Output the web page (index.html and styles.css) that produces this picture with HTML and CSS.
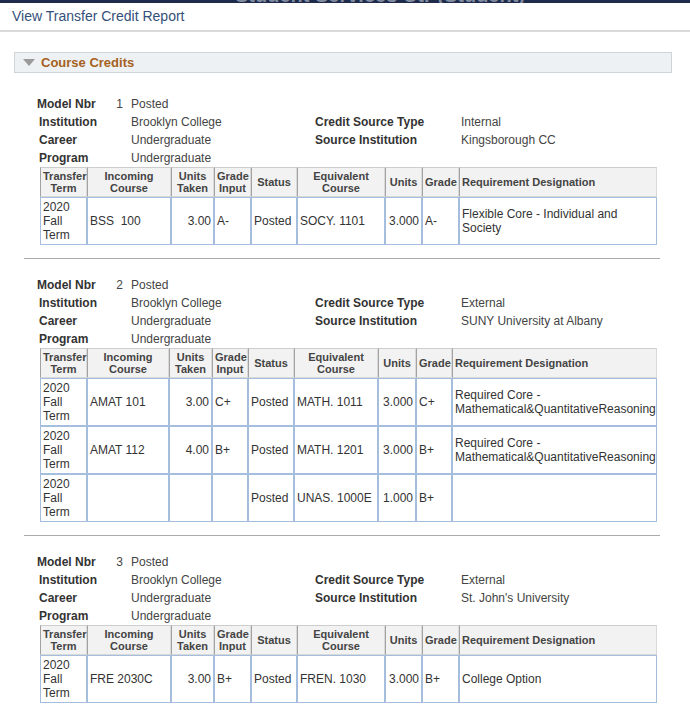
FILE: index.html
```html
<!DOCTYPE html>
<html>
<head>
<meta charset="utf-8">
<title>View Transfer Credit Report</title>
<link rel="stylesheet" href="styles.css">
</head>
<body>
<div class="topbar"><div class="topbar-text">Student Services Ctr (Student)</div></div>
<div class="page-title">View Transfer Credit Report</div>

<div class="group-box">
  <span class="caret"></span>
  <span class="group-title">Course Credits</span>
</div>

<div class="record">
  <div class="info">
    <div class="model"><span class="lbl">Model Nbr</span><span class="num">1</span></div>
    <div class="val">Posted</div><div></div><div></div>
    <div class="lbl">Institution</div><div class="val">Brooklyn College</div>
    <div class="lbl">Credit Source Type</div><div class="val">Internal</div>
    <div class="lbl">Career</div><div class="val">Undergraduate</div>
    <div class="lbl">Source Institution</div><div class="val">Kingsborough CC</div>
    <div class="lbl">Program</div><div class="val">Undergraduate</div><div></div><div></div>
  </div>
  <table class="grid">
    <colgroup><col style="width:47px"><col style="width:84px"><col style="width:43px"><col style="width:37px"><col style="width:46px"><col style="width:88px"><col style="width:37px"><col style="width:37px"><col style="width:198px"></colgroup>
    <thead><tr><th>Transfer Term</th><th>Incoming Course</th><th>Units Taken</th><th>Grade Input</th><th>Status</th><th>Equivalent Course</th><th>Units</th><th>Grade</th><th class="left">Requirement Designation</th></tr></thead>
    <tbody>
      <tr><td>2020 Fall Term</td><td>BSS&nbsp; 100</td><td class="num">3.00</td><td>A-</td><td>Posted</td><td>SOCY. 1101</td><td class="num">3.000</td><td>A-</td><td>Flexible Core - Individual and Society</td></tr>
    </tbody>
  </table>
</div>

<div class="record">
  <div class="info">
    <div class="model"><span class="lbl">Model Nbr</span><span class="num">2</span></div>
    <div class="val">Posted</div><div></div><div></div>
    <div class="lbl">Institution</div><div class="val">Brooklyn College</div>
    <div class="lbl">Credit Source Type</div><div class="val">External</div>
    <div class="lbl">Career</div><div class="val">Undergraduate</div>
    <div class="lbl">Source Institution</div><div class="val">SUNY University at Albany</div>
    <div class="lbl">Program</div><div class="val">Undergraduate</div><div></div><div></div>
  </div>
  <table class="grid">
    <colgroup><col style="width:47px"><col style="width:82px"><col style="width:43px"><col style="width:36px"><col style="width:46px"><col style="width:84px"><col style="width:38px"><col style="width:36px"><col style="width:205px"></colgroup>
    <thead><tr><th>Transfer Term</th><th>Incoming Course</th><th>Units Taken</th><th>Grade Input</th><th>Status</th><th>Equivalent Course</th><th>Units</th><th>Grade</th><th class="left">Requirement Designation</th></tr></thead>
    <tbody>
      <tr><td>2020 Fall Term</td><td>AMAT 101</td><td class="num">3.00</td><td>C+</td><td>Posted</td><td>MATH. 1011</td><td class="num">3.000</td><td>C+</td><td>Required Core - Mathematical&amp;QuantitativeReasoning</td></tr>
      <tr><td>2020 Fall Term</td><td>AMAT 112</td><td class="num">4.00</td><td>B+</td><td>Posted</td><td>MATH. 1201</td><td class="num">3.000</td><td>B+</td><td>Required Core - Mathematical&amp;QuantitativeReasoning</td></tr>
      <tr><td>2020 Fall Term</td><td></td><td class="num"></td><td></td><td>Posted</td><td>UNAS. 1000E</td><td class="num">1.000</td><td>B+</td><td></td></tr>
    </tbody>
  </table>
</div>

<div class="record">
  <div class="info">
    <div class="model"><span class="lbl">Model Nbr</span><span class="num">3</span></div>
    <div class="val">Posted</div><div></div><div></div>
    <div class="lbl">Institution</div><div class="val">Brooklyn College</div>
    <div class="lbl">Credit Source Type</div><div class="val">External</div>
    <div class="lbl">Career</div><div class="val">Undergraduate</div>
    <div class="lbl">Source Institution</div><div class="val">St. John's University</div>
    <div class="lbl">Program</div><div class="val">Undergraduate</div><div></div><div></div>
  </div>
  <table class="grid">
    <colgroup><col style="width:47px"><col style="width:84px"><col style="width:43px"><col style="width:37px"><col style="width:46px"><col style="width:88px"><col style="width:37px"><col style="width:37px"><col style="width:198px"></colgroup>
    <thead><tr><th>Transfer Term</th><th>Incoming Course</th><th>Units Taken</th><th>Grade Input</th><th>Status</th><th>Equivalent Course</th><th>Units</th><th>Grade</th><th class="left">Requirement Designation</th></tr></thead>
    <tbody>
      <tr><td>2020 Fall Term</td><td>FRE 2030C</td><td class="num">3.00</td><td>B+</td><td>Posted</td><td>FREN. 1030</td><td class="num">3.000</td><td>B+</td><td>College Option</td></tr>
    </tbody>
  </table>
</div>
</body>
</html>
```

FILE: styles.css
```css
html, body {
  margin: 0;
  padding: 0;
  background: #ffffff;
  font-family: "Liberation Sans", Arial, sans-serif;
  color: #333333;
}

.topbar {
  height: 3px;
  overflow: hidden;
  background: #1f2b4b;
}

.topbar-text {
  margin-top: -15px;
  padding-left: 70px;
  text-align: center;
  font-size: 20px;
  line-height: 20px;
  font-weight: bold;
  color: #7f89a0;
}

.page-title {
  height: 27px;
  line-height: 27px;
  padding-left: 12px;
  font-size: 14px;
  color: #34507a;
  border-bottom: 2px solid #d9d9d9;
}

.group-box {
  display: flex;
  align-items: center;
  height: 19px;
  margin: 20px 18px 5px 14px;
  padding-left: 8px;
  border: 1px solid #cfd4d9;
  background: #eef1f4;
}

.caret {
  width: 0;
  height: 0;
  border-left: 6px solid transparent;
  border-right: 6px solid transparent;
  border-top: 7px solid #9a9a9a;
  margin-right: 6px;
}

.group-title {
  font-size: 13px;
  font-weight: bold;
  color: #a5611d;
}

.record {
  margin: 0 30px 0 24px;
  padding: 17px 0 13px 15px;
  border-bottom: 1px solid #ababab;
}

.info {
  display: grid;
  grid-template-columns: 92px 184px 146px 1fr;
  grid-auto-rows: 18px;
  line-height: 18px;
  font-size: 12px;
}

.info .lbl {
  font-weight: bold;
  color: #333333;
}

.info .val {
  color: #444444;
}

.model {
  display: flex;
  justify-content: space-between;
  margin-left: -2px;
  padding-right: 8px;
}

.model .num {
  color: #444444;
}

.grid {
  margin-left: 1px;
  width: 617px;
  table-layout: fixed;
  border-collapse: separate;
  border-spacing: 0;
}

.grid th {
  background: #f2f2f2;
  font-size: 11px;
  line-height: 12px;
  font-weight: bold;
  color: #444444;
  text-align: center;
  vertical-align: middle;
  padding: 2px 2px;
  height: 24px;
  border-top: 1px solid #cdcdcd;
  border-left: 1px solid #a2a2a2;
  border-right: 1px solid #d9d9d9;
  border-bottom: 1px solid #d9d9d9;
}

.grid th.left {
  text-align: left;
}

.grid td {
  font-size: 12px;
  line-height: 14px;
  color: #333333;
  vertical-align: middle;
  padding: 2px 2px;
  height: 42px;
  border: 1px solid #a6bedd;
  text-align: left;
}

.grid td.num {
  text-align: right;
}
```
